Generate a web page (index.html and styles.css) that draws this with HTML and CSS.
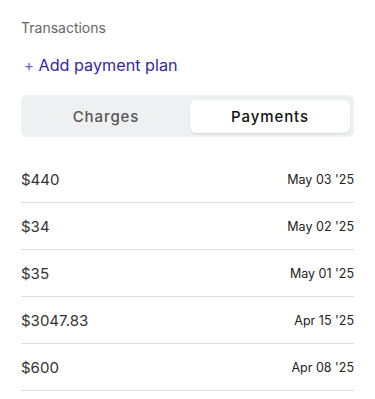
FILE: index.html
```html
<!DOCTYPE html>
<html lang="en">
<head>
  <meta charset="UTF-8">
  <meta name="viewport" content="width=device-width, initial-scale=1.0">
  <title>Transactions</title>
  <link rel="stylesheet" href="styles.css">
</head>
<body>
  <div class="container">
    <div class="title">Transactions</div>
    <a class="add" href="#"><span class="plus">+</span> Add payment plan</a>
    <div class="tabs">
      <button class="tab">Charges</button>
      <button class="tab active">Payments</button>
    </div>
    <ul class="list">
      <li><span class="amount">$440</span><span class="date">May 03 '25</span></li>
      <li><span class="amount">$34</span><span class="date">May 02 '25</span></li>
      <li><span class="amount">$35</span><span class="date">May 01 '25</span></li>
      <li><span class="amount">$3047.83</span><span class="date">Apr 15 '25</span></li>
      <li><span class="amount">$600</span><span class="date">Apr 08 '25</span></li>
    </ul>
  </div>
</body>
</html>
```

FILE: styles.css
```css
body {
  margin: 0;
  background: #fff;
  font-family: "Inter", sans-serif;
}
.container {
  padding: 18px 21px 0 21px;
}
.title {
  font-size: 14px;
  color: #666;
  line-height: 20px;
}
.add {
  display: block;
  margin-top: 17px;
  padding-left: 3px;
  font-size: 16.2px;
  line-height: 20px;
  color: #3726a6;
  text-decoration: none;
}
.plus {
  color: #6d5fd0;
  font-size: 15px;
}
.tabs {
  display: flex;
  margin-top: 19px;
  padding: 5px 4px 4px 5px;
  background: #eef0f2;
  border-radius: 6px;
  gap: 4px;
}
.tab {
  flex: 1;
  height: 33px;
  border: none;
  border-radius: 6px;
  background: transparent;
  font-family: "Inter", sans-serif;
  font-size: 15px;
  font-weight: 500;
  letter-spacing: 0.9px;
  color: #555;
  cursor: pointer;
}
.tab.active {
  background: #fff;
  color: #111;
  box-shadow: 0 1px 2px rgba(0, 0, 0, 0.12);
}
.list {
  list-style: none;
  padding: 0;
  margin: 19px 0 0 0;
}
.list li {
  display: flex;
  justify-content: space-between;
  align-items: center;
  height: 46px;
  border-bottom: 1px solid #dedede;
}
.amount {
  font-size: 15px;
  color: #333;
}
.date {
  font-size: 12.5px;
  color: #222;
}
```
